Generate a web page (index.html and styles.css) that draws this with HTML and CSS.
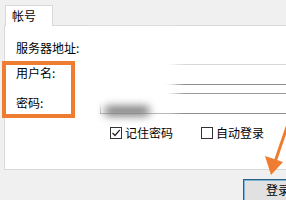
FILE: index.html
```html
<!DOCTYPE html>
<html>
<head>
<meta charset="utf-8">
<link rel="stylesheet" href="styles.css">
</head>
<body>
<div class="tabs"><div class="tab">帐号</div></div>
<div class="panel">
  <div class="row server"><span class="label">服务器地址:</span></div>
  <div class="row field"><span class="label">用户名:</span><div class="input user"></div></div>
  <div class="row field pass"><span class="label">密码:</span><div class="input"></div></div>
  <div class="checks">
    <span class="check"><span class="box"><svg width="10" height="10" viewBox="0 0 10 10"><path d="M1.5 5 L4 7.5 L8.8 1.8" fill="none" stroke="#222" stroke-width="1.2"/></svg></span>记住密码</span>
    <span class="check second"><span class="box"></span>自动登录</span>
  </div>
</div>
<div class="footer"><div class="button">登录</div></div>
<div class="blur blur-white"></div>
<div class="blur blur-gray"></div>
<div class="highlight"></div>
<svg class="arrow" width="286" height="200" viewBox="0 0 286 200"><line x1="288" y1="124" x2="275" y2="162" stroke="#ef7d31" stroke-width="3"/><polygon points="265,156 283,162 271,175" fill="#ef7d31"/></svg>
</body>
</html>
```
FILE: styles.css
```css
html, body {
  margin: 0;
  padding: 0;
}
body {
  width: 286px;
  height: 200px;
  overflow: hidden;
  position: relative;
  background: #f0f0f0;
  font-family: "Noto Sans CJK SC", "Microsoft YaHei", sans-serif;
  font-size: 12px;
  color: #000;
}
.tabs {
  padding: 5px 0 0 5px;
  height: 20px;
}
.tab {
  box-sizing: border-box;
  width: 48px;
  height: 21px;
  background: #fff;
  border: 1px solid #d9d9d9;
  border-bottom: 0;
  padding-left: 6px;
  line-height: 19px;
  position: relative;
  z-index: 1;
}
.panel {
  margin-left: 4px;
  margin-right: -20px;
  height: 143px;
  border: 1px solid #d9d9d9;
  background: #fff;
  padding-left: 11px;
}
.row {
  display: flex;
  align-items: center;
}
.server {
  margin-top: 12px;
  height: 20px;
}
.label {
  width: 84px;
  flex: none;
  line-height: 14px;
}
.field {
  margin-top: 6px;
  height: 21px;
}
.field .label {
  margin-top: -3px;
}
.field.pass {
  margin-top: 8px;
}
.field.pass .label {
  margin-top: -1px;
}
.input {
  box-sizing: border-box;
  flex: 1;
  height: 21px;
  border: 1px solid #8c8c8c;
  border-top-color: #9a9a9a;
}
.input.user {
  border-top-color: #d8d8d8;
}
.checks {
  margin-top: 12px;
  height: 14px;
  display: flex;
  align-items: center;
  padding-left: 94px;
}
.check {
  display: flex;
  align-items: center;
  gap: 3px;
  line-height: 14px;
}
.check.second {
  margin-left: 28px;
}
.box {
  box-sizing: border-box;
  width: 12px;
  height: 12px;
  border: 1px solid #333;
  display: flex;
  align-items: center;
  justify-content: center;
}
.footer {
  padding: 9px 0 0 243px;
}
.button {
  box-sizing: border-box;
  width: 75px;
  height: 24px;
  border: 1px solid #2a5f86;
  box-shadow: inset 0 0 0 1px #7eb4d6;
  background: #e1e1e1;
  padding-left: 22px;
  line-height: 20px;
}
.blur {
  position: absolute;
}
.blur-white {
  left: 86px;
  top: 32px;
  width: 90px;
  height: 80px;
  background: #fff;
  filter: blur(6px);
}
.blur-gray {
  left: 104px;
  top: 106px;
  width: 46px;
  height: 10px;
  background: #7a7a7a;
  border-radius: 5px;
  filter: blur(4px);
}
.highlight {
  position: absolute;
  box-sizing: border-box;
  left: 2px;
  top: 61px;
  width: 73px;
  height: 57px;
  border: 4px solid #ef7d31;
}
.arrow {
  position: absolute;
  left: 0;
  top: 0;
}
```
